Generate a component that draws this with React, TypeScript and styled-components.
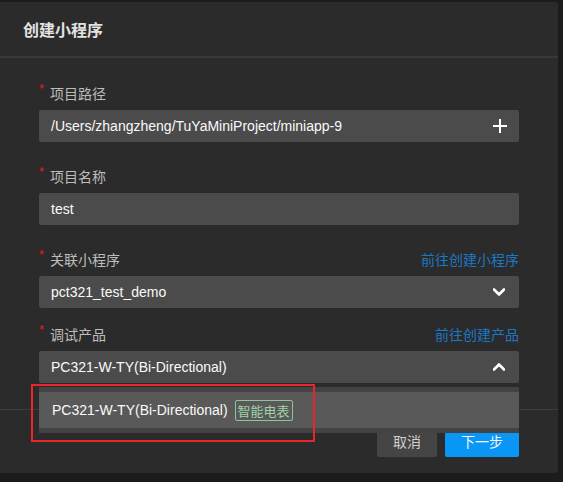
import { styled, createGlobalStyle } from "styled-components";

const GlobalStyle = createGlobalStyle`
  html, body {
    margin: 0;
    padding: 0;
    background: #1c1c1c;
  }
  body {
    font-family: "Liberation Sans", "Noto Sans CJK SC", sans-serif;
    -webkit-font-smoothing: antialiased;
  }
`;

/**
 * 创建小程序 弹窗
 */
export default function App() {
  const PRODUCT = "PC321-W-TY(Bi-Directional)";

  return (
    <Page>
      <GlobalStyle />
      <Modal>
        <Header>创建小程序</Header>

        <Body>
          <FormItem>
            <LabelRow>
              <Label>项目路径</Label>
            </LabelRow>
            <Field>
              <Value>/Users/zhangzheng/TuYaMiniProject/miniapp-9</Value>
              <PlusIcon />
            </Field>
          </FormItem>

          <FormItem>
            <LabelRow>
              <Label>项目名称</Label>
            </LabelRow>
            <Field>
              <Value>test</Value>
            </Field>
          </FormItem>

          <FormItem $gap={16}>
            <LabelRow>
              <Label>关联小程序</Label>
              <Link>前往创建小程序</Link>
            </LabelRow>
            <Field>
              <Value>pct321_test_demo</Value>
              <Chevron />
            </Field>
          </FormItem>

          <FormItem $gap={0}>
            <LabelRow>
              <Label>调试产品</Label>
              <Link>前往创建产品</Link>
            </LabelRow>
            <SelectWrap>
              <Field>
                <Value>{PRODUCT}</Value>
                <Chevron $up />
              </Field>
              <Dropdown>
                <Option>
                  {PRODUCT}
                  <Tag>智能电表</Tag>
                </Option>
              </Dropdown>
              {/* 标注框 */}
              <Highlight />
            </SelectWrap>
          </FormItem>
        </Body>

        <Footer>
          <Button>取消</Button>
          <Button $primary>下一步</Button>
        </Footer>
      </Modal>
    </Page>
  );
}

function PlusIcon() {
  return (
    <Icon width="14" height="14" viewBox="0 0 14 14">
      <path d="M7 0V14M0 7H14" stroke="#fff" strokeWidth="2" />
    </Icon>
  );
}

function Chevron({ $up }: { $up?: boolean }) {
  return (
    <Icon width="12" height="8" viewBox="0 0 12 8" style={{ marginRight: 2 }}>
      <polyline
        points={$up ? "1,6.5 6,1.5 11,6.5" : "1,1.5 6,6.5 11,1.5"}
        fill="none"
        stroke="#fff"
        strokeWidth="2.6"
        strokeLinecap="round"
        strokeLinejoin="round"
      />
    </Icon>
  );
}

const Page = styled.div`
  padding-top: 2px;
  padding-bottom: 8px;
`;

const Modal = styled.div`
  width: 558px;
  background: #2b2b2b;
  border-radius: 0 3px 3px 0;
`;

const Header = styled.div`
  height: 54px;
  padding: 0 23px;
  display: flex;
  align-items: center;
  font-size: 16px;
  font-weight: bold;
  color: #e2e2e2;
  border-bottom: 2px solid #383838;
`;

const Body = styled.div`
  padding: 25px 39px 26px;
`;

const FormItem = styled.div<{ $gap?: number }>`
  display: flex;
  flex-direction: column;
  gap: 7px;
  margin-bottom: ${(p) => (p.$gap ?? 24)}px;
`;

const LabelRow = styled.div`
  display: flex;
  justify-content: space-between;
  align-items: center;
  height: 20px;
`;

const Label = styled.div`
  position: relative;
  padding-left: 11px;
  font-size: 14px;
  color: #bdbdbd;

  &::before {
    content: "*";
    position: absolute;
    left: 0;
    top: -2px;
    font-size: 13px;
    color: #e41b1b;
  }
`;

const Link = styled.div`
  font-size: 14px;
  color: #1a79c4;
`;

const Field = styled.div`
  height: 32px;
  padding: 0 12px 0 12px;
  display: flex;
  align-items: center;
  justify-content: space-between;
  background: #4b4b4b;
  border-radius: 2px;
`;

const Value = styled.div`
  font-size: 14px;
  color: #fafafa;
`;

const Icon = styled.svg`
  flex: none;
  display: block;
`;

const SelectWrap = styled.div`
  position: relative;
`;

const Dropdown = styled.div`
  position: absolute;
  top: calc(100% + 4px);
  left: 0;
  right: 0;
  padding: 5px 0 5px;
  background: #434343;
  z-index: 2;
`;

const Option = styled.div`
  height: 36px;
  padding: 0 13px;
  display: flex;
  align-items: center;
  gap: 7px;
  background: #595959;
  font-size: 14px;
  color: #fafafa;
`;

const Tag = styled.span`
  height: 19px;
  padding: 0 2px;
  display: inline-flex;
  align-items: center;
  border: 1px solid #8fc49a;
  border-radius: 2px;
  font-size: 13px;
  color: #9fd2a8;
`;

const Highlight = styled.div`
  position: absolute;
  top: calc(100% + 1px);
  left: -8px;
  width: 280px;
  height: 54px;
  border: 2px solid #e8262c;
  z-index: 3;
`;

const Footer = styled.div`
  display: flex;
  justify-content: flex-end;
  gap: 8px;
  padding: 15px 39px 16px;
  border-top: 1px solid #3d3d3d;
`;

const Button = styled.button<{ $primary?: boolean }>`
  height: 32px;
  width: ${(p) => (p.$primary ? 74 : 60)}px;
  padding: 0;
  border: none;
  border-radius: 2px;
  font-family: inherit;
  font-size: 14px;
  color: ${(p) => (p.$primary ? "#f2f8ff" : "#cfcfcf")};
  background: ${(p) => (p.$primary ? "#0a96f5" : "#454545")};
`;
